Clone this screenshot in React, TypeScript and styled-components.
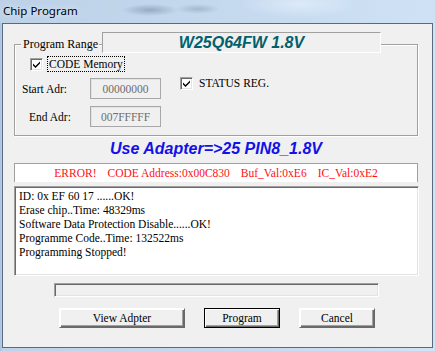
import styled, { createGlobalStyle } from "styled-components";

const GlobalStyle = createGlobalStyle`
  html, body {
    margin: 0;
    padding: 0;
    background: #c3d7ec;
  }
  * {
    box-sizing: border-box;
  }
`;

const Window = styled.div`
  width: 435px;
  height: 351px;
  display: flex;
  flex-direction: column;
  background: linear-gradient(to right, #a9c3df 0px, #bcd3ea 3px, #c6dbf0 60%, #d0e3f6);
  overflow: hidden;
`;

const TitleBar = styled.div`
  height: 23px;
  flex: none;
  display: flex;
  align-items: center;
  padding-left: 3px;
  padding-bottom: 2px;
  font-family: "Noto Sans", "DejaVu Sans", sans-serif;
  font-size: 11.5px;
  color: #000;
  background:
    radial-gradient(ellipse 28px 6px at 150px 10px, rgba(70, 90, 120, 0.35), transparent),
    radial-gradient(ellipse 22px 5px at 198px 9px, rgba(70, 90, 120, 0.25), transparent),
    radial-gradient(ellipse 60px 14px at 300px 4px, rgba(240, 248, 255, 0.5), transparent),
    linear-gradient(to right, #bcd1e7, #c4d8ee 50%, #cfe2f5);
`;

const TitleText = styled.span`
  text-shadow: 0 0 6px rgba(255, 255, 255, 0.9);
`;

const Client = styled.div`
  flex: 1;
  margin: 0 2px 3px 2px;
  border: 1px solid #5a6a7e;
  background: #f0f0f0;
  display: flex;
  flex-direction: column;
  padding-left: 11px;
  font-family: "Liberation Serif", "Times New Roman", serif;
  font-size: 11.5px;
  color: #000;
`;

const GroupBox = styled.div`
  margin-top: 20px;
  width: 404px;
  height: 92px;
  border: 1px solid #a0a0a0;
  box-shadow: inset 1px 1px 0 #fff, 1px 1px 0 #fff;
  display: flex;
  flex-direction: column;
`;

const GroupHeader = styled.div`
  margin-top: -13px;
  height: 21px;
  display: flex;
  align-items: flex-start;
`;

const Legend = styled.span`
  margin: 5px 0 0 6px;
  padding: 0 1px 0 2px;
  height: 14px;
  line-height: 14px;
  background: #f0f0f0;
  font-size: 12px;
`;

const ChipPanel = styled.div`
  margin-left: auto;
  margin-right: 36px;
  width: 279px;
  height: 21px;
  border-top: 1px solid #a0a0a0;
  border-left: 1px solid #a0a0a0;
  border-right: 1px solid #fff;
  border-bottom: 1px solid #fff;
  background: #f0f0f0;
  display: flex;
  align-items: center;
  justify-content: center;
  font-family: "Liberation Sans", Arial, sans-serif;
  font-weight: bold;
  font-style: italic;
  font-size: 16px;
  color: #00606c;
`;

const GroupBody = styled.div`
  display: flex;
  padding-top: 3px;
`;

const LeftCol = styled.div`
  display: flex;
  flex-direction: column;
  width: 146px;
`;

const RightCol = styled.div`
  padding-top: 19px;
  margin-left: 19px;
`;

const CheckRow = styled.label`
  display: flex;
  align-items: center;
  gap: 4px;
  height: 16px;
  margin-left: ${(p: { $indent: number }) => p.$indent}px;
`;

const CheckBox = styled.span`
  width: 13px;
  height: 13px;
  flex: none;
  display: flex;
  align-items: center;
  justify-content: center;
  background: #fff;
  border-top: 1px solid #a0a0a0;
  border-left: 1px solid #a0a0a0;
  border-right: 1px solid #fff;
  border-bottom: 1px solid #fff;
  box-shadow: inset 1px 1px 0 #696969, inset -1px -1px 0 #e3e3e3;
`;

const CheckLabel = styled.span<{ $focused?: boolean }>`
  padding: 0 1px;
  line-height: 14px;
  border: 1px dotted ${(p) => (p.$focused ? "#000" : "transparent")};
`;

const AddrRow = styled.div`
  display: flex;
  align-items: center;
  height: 21px;
  margin-top: ${(p: { $top: number }) => p.$top}px;
`;

const AddrLabel = styled.span<{ $indent: number }>`
  width: 75px;
  padding-left: ${(p) => p.$indent}px;
`;

const AddrInput = styled.div`
  width: 71px;
  height: 21px;
  border: 1px solid #a8a8a8;
  box-shadow: inset 1px 1px 0 #e3e3e3;
  background: #f0f0f0;
  color: #6d6d6d;
  display: flex;
  align-items: center;
  justify-content: center;
`;

const AdapterTitle = styled.div`
  margin-top: 4px;
  width: 404px;
  height: 18px;
  line-height: 18px;
  text-align: center;
  font-family: "Liberation Sans", Arial, sans-serif;
  font-weight: bold;
  font-style: italic;
  font-size: 16px;
  color: #1212e8;
`;

const ErrorBar = styled.div`
  margin-top: 5px;
  width: 404px;
  height: 19px;
  background: #fff;
  border-top: 1px solid #a0a0a0;
  border-left: 1px solid #a0a0a0;
  border-right: 1px solid #a0a0a0;
  display: flex;
  align-items: center;
  justify-content: center;
  gap: 11px;
  color: #ff1010;
`;

const LogBox = styled.div`
  margin-top: 4px;
  width: 405px;
  height: 90px;
  background: #fff;
  border-top: 1px solid #a0a0a0;
  border-left: 1px solid #a0a0a0;
  border-right: 1px solid #fff;
  border-bottom: 1px solid #fff;
  box-shadow: inset 1px 1px 0 #696969, inset -1px -1px 0 #e3e3e3;
  padding: 2px 0 0 4px;
  line-height: 14px;
`;

const ProgressBar = styled.div`
  margin: 7px 0 0 40px;
  width: 325px;
  height: 14px;
  background: #f0f0f0;
  border-top: 1px solid #a0a0a0;
  border-left: 1px solid #a0a0a0;
  border-right: 1px solid #fff;
  border-bottom: 1px solid #fff;
  box-shadow: inset 1px 1px 0 #696969, inset -1px -1px 0 #e3e3e3;
`;

const ButtonRow = styled.div`
  margin: 11px 0 0 45px;
  display: flex;
  gap: 19px;
`;

const Button = styled.button<{ $width: number; $default?: boolean }>`
  width: ${(p) => p.$width}px;
  height: 20px;
  padding: 0;
  font-family: "Liberation Serif", "Times New Roman", serif;
  font-size: 11.5px;
  color: #000;
  background: #f0f0f0;
  border: 1px solid ${(p) => (p.$default ? "#000" : "transparent")};
  box-shadow: ${(p) =>
    p.$default
      ? "inset 1px 1px 0 #fff, inset -1px -1px 0 #696969, inset -2px -2px 0 #a0a0a0"
      : "inset 1px 1px 0 #fff, inset -1px -1px 0 #696969, inset -2px -2px 0 #a0a0a0"};
  ${(p) => (p.$default ? "" : "border-top-color: #fff; border-left-color: #fff; border-right-color: #696969; border-bottom-color: #696969;")}
`;

const Check = () => (
  <svg width="9" height="9" viewBox="0 0 9 9">
    <path d="M1 3.5 L3.5 6 L8 1.5 L8 3.5 L3.5 8 L1 5.5 Z" fill="#000" />
  </svg>
);

const logLines = [
  "ID: 0x EF 60 17 ......OK!",
  "Erase chip..Time: 48329ms",
  "Software Data Protection Disable......OK!",
  "Programme Code..Time: 132522ms",
  "Programming Stopped!",
];

const App = () => {
  return (
    <Window>
      <GlobalStyle />
      <TitleBar>
        <TitleText>Chip Program</TitleText>
      </TitleBar>
      <Client>
        <GroupBox>
          <GroupHeader>
            <Legend>Program Range</Legend>
            <ChipPanel>W25Q64FW 1.8V</ChipPanel>
          </GroupHeader>
          <GroupBody>
            <LeftCol>
              <CheckRow $indent={15}>
                <CheckBox>
                  <Check />
                </CheckBox>
                <CheckLabel $focused>CODE Memory</CheckLabel>
              </CheckRow>
              <AddrRow $top={6}>
                <AddrLabel $indent={7}>Start Adr:</AddrLabel>
                <AddrInput>00000000</AddrInput>
              </AddrRow>
              <AddrRow $top={7}>
                <AddrLabel $indent={14}>End Adr:</AddrLabel>
                <AddrInput>007FFFFF</AddrInput>
              </AddrRow>
            </LeftCol>
            <RightCol>
              <CheckRow $indent={0}>
                <CheckBox>
                  <Check />
                </CheckBox>
                <CheckLabel>STATUS REG.</CheckLabel>
              </CheckRow>
            </RightCol>
          </GroupBody>
        </GroupBox>
        <AdapterTitle>Use Adapter=&gt;25 PIN8_1.8V</AdapterTitle>
        <ErrorBar>
          <span>ERROR!</span>
          <span>CODE Address:0x00C830</span>
          <span>Buf_Val:0xE6</span>
          <span>IC_Val:0xE2</span>
        </ErrorBar>
        <LogBox>
          {logLines.map((line) => (
            <div key={line}>{line}</div>
          ))}
        </LogBox>
        <ProgressBar />
        <ButtonRow>
          <Button $width={126}>View Adpter</Button>
          <Button $width={76} $default>
            Program
          </Button>
          <Button $width={76}>Cancel</Button>
        </ButtonRow>
      </Client>
    </Window>
  );
};

export default App;
